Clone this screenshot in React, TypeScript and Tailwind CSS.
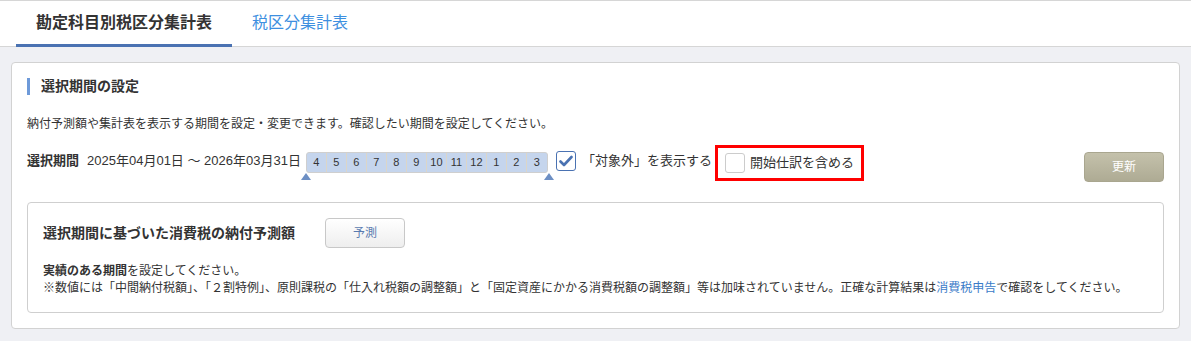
import React from "react";

const months = [4, 5, 6, 7, 8, 9, 10, 11, 12, 1, 2, 3];

function Check() {
  return (
    <svg width="14" height="12" viewBox="0 0 14 12">
      <path d="M1.5 6.5 L5 10 L12.5 2" fill="none" stroke="#4a72b2" strokeWidth="2.6" strokeLinecap="round" strokeLinejoin="round" />
    </svg>
  );
}

function Tri() {
  return (
    <svg width="10" height="7" viewBox="0 0 10 7">
      <polygon points="5,0 10,7 0,7" fill="#6d8fc4" />
    </svg>
  );
}

export default function App() {
  return (
    <div className="min-h-[341px] bg-[#eff0f4] font-['Liberation_Sans','Noto_Sans_CJK_JP',sans-serif] text-[#333]">
      {/* Tabs */}
      <div className="flex h-[47px] border-t border-b border-[#d6d6d6] bg-white pl-[16px]">
        <div className="relative flex items-center px-[20px] pb-[2px] text-[16px] font-bold text-[#333]">
          勘定科目別税区分集計表
          <div className="absolute left-0 right-0 bottom-[-1px] h-[3px] bg-[#4a72b2]" />
        </div>
        <div className="flex items-center px-[20px] pb-[2px] text-[16px] text-[#3d8fe0]">
          税区分集計表
        </div>
      </div>

      {/* Card */}
      <div className="mx-[11px] mt-[15px] rounded-[4px] border border-[#d2d2d2] bg-white px-[15px] pt-[15px] pb-[15px]">
        <div className="flex h-[17px] items-center">
          <div className="h-[17px] w-[3px] bg-[#6e9ad9]" />
          <div className="ml-[11px] text-[14px] font-bold leading-[17px] text-[#333]">選択期間の設定</div>
        </div>

        <div className="mt-[21px] text-[12px] leading-[16px]">
          納付予測額や集計表を表示する期間を設定・変更できます。確認したい期間を設定してください。
        </div>

        <div className="mt-[13px] flex h-[37px] items-start">
          <div className="mt-[6px] text-[13px] leading-[20px] font-bold">選択期間</div>
          <div className="mt-[6px] ml-[8px] text-[13px] leading-[20px]">2025年04月01日 〜 2026年03月31日</div>

          <div className="relative ml-[5px] mt-[7px]">
            <div className="flex h-[21px] rounded-[3px] border border-[#cfcfcf] bg-[#c5d5ed]">
              {months.map((m, i) => (
                <div
                  key={i}
                  className={
                    "flex w-[20px] items-center justify-center text-[11px] text-[#333] " +
                    (i < months.length - 1 ? "border-r border-[#dcd6c8]" : "")
                  }
                >
                  {m}
                </div>
              ))}
            </div>
            <div className="absolute left-[-5px] top-[21px] flex">
              <Tri />
            </div>
            <div className="absolute right-[-6px] top-[21px] flex">
              <Tri />
            </div>
          </div>

          <div className="ml-[8px] mt-[6px] flex h-[20px] w-[20px] items-center justify-center rounded-[3px] border-[1.5px] border-[#4a72b2] bg-white">
            <Check />
          </div>
          <div className="ml-[6px] mt-[6px] text-[13px] leading-[20px]">「対象外」を表示する</div>

          <div className="ml-[3px] flex h-[36px] items-center border-[3px] border-[#ff0000] pl-[7px] pr-[7px]">
            <div className="h-[20px] w-[20px] rounded-[3px] border border-[#cccccc] bg-white" />
            <div className="ml-[5px] text-[13px] leading-[20px]">開始仕訳を含める</div>
          </div>

          <button className="ml-auto mt-[7px] flex h-[30px] w-[80px] items-center justify-center rounded-[4px] border border-[#a9a68f] bg-gradient-to-b from-[#c4c1ab] to-[#aeab94] text-[12px] text-white">
            更新
          </button>
        </div>

        {/* Inner box */}
        <div className="mt-[20px] rounded-[4px] border border-[#cfcfcf] px-[15px] pt-[15px] pb-[15px]">
          <div className="flex h-[30px] items-center">
            <div className="text-[14px] font-bold text-[#333]">選択期間に基づいた消費税の納付予測額</div>
            <button className="ml-[30px] flex h-[30px] w-[80px] items-center justify-center rounded-[4px] border border-[#c8c8c8] bg-gradient-to-b from-[#ffffff] to-[#eeeeee] text-[12px] text-[#5a7bb0]">
              予測
            </button>
          </div>
          <div className="mt-[15px] text-[12px] leading-[17px]">
            <span className="font-bold">実績のある期間</span>を設定してください。
          </div>
          <div className="text-[12px] leading-[17px]">
            ※数値には「中間納付税額」、「２割特例」、原則課税の「仕入れ税額の調整額」と「固定資産にかかる消費税額の調整額」等は加味されていません。正確な計算結果は<span className="text-[#3a7bc8]">消費税申告</span>で確認をしてください。
          </div>
        </div>
      </div>
    </div>
  );
}
